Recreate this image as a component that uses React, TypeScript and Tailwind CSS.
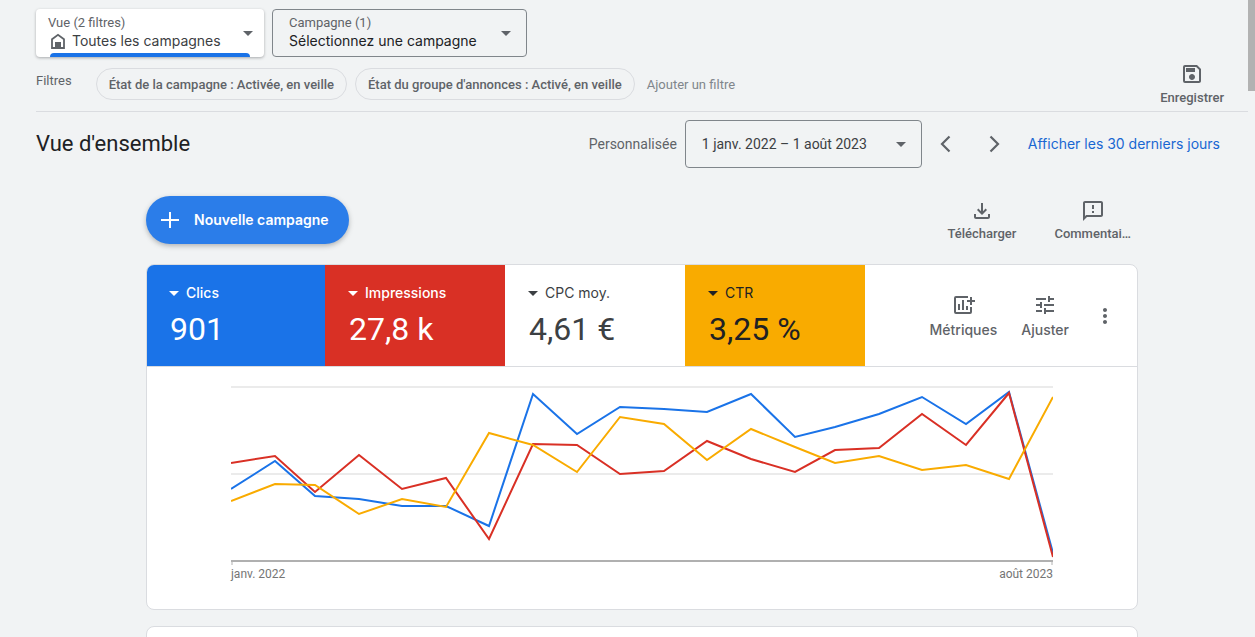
import type { ReactNode } from 'react';
import { MdArrowDropDown, MdMoreVert, MdOutlineFeedback, MdOutlineFileDownload, MdOutlineSave, MdTune } from 'react-icons/md';

const display = "font-['Inter','Liberation_Sans',sans-serif]";

const metrics = [
  { label: 'Clics', value: '901', className: 'bg-[#1a73e8] text-white', weight: 'font-medium' },
  { label: 'Impressions', value: '27,8 k', className: 'bg-[#d93025] text-white', weight: 'font-medium' },
  { label: 'CPC moy.', value: '4,61 €', className: 'bg-white text-[#3c4043]', weight: 'font-normal' },
  { label: 'CTR', value: '3,25 %', className: 'bg-[#f9ab00] text-[#202124]', weight: 'font-normal' },
];

// One x position per month, January 2022 to August 2023
const months = [0, 44, 84, 128, 171, 215, 258, 302, 346, 389, 433, 476, 520, 564, 604, 648, 691, 735, 778, 822];

const series = [
  { name: 'Clics', color: '#1a73e8', values: [108, 80, 115, 118, 125, 125, 145, 13, 53, 26, 28, 31, 13, 56, 46, 33, 16, 43, 11, 172] },
  { name: 'Impressions', color: '#d93025', values: [82, 75, 111, 74, 108, 97, 158, 63, 64, 93, 90, 60, 78, 91, 69, 67, 33, 64, 12, 176] },
  { name: 'CTR', color: '#f9ab00', values: [120, 103, 104, 133, 118, 126, 52, 64, 91, 36, 43, 79, 48, 66, 82, 75, 89, 84, 98, 16] },
];

function HomeIcon() {
  return (
    <svg viewBox="0 0 16 16" className="size-4 text-[#5f6368]" aria-hidden="true">
      <path d="M2 6.3 8 1.8l6 4.5V15H2z" fill="none" stroke="currentColor" strokeWidth="1.8" />
      <path d="M5 9h6v6H5z" fill="currentColor" />
    </svg>
  );
}

function AddChartIcon() {
  return (
    <svg viewBox="0 0 24 24" className="size-6" fill="currentColor" aria-hidden="true">
      <path d="M17 3H5a2 2 0 0 0-2 2v14a2 2 0 0 0 2 2h14a2 2 0 0 0 2-2v-5h-2v5H5V5h12z" />
      <path d="M7 11h2v6H7zM11 7h2v10h-2zM15 13h2v4h-2zM19 4h2v3h3v2h-3v3h-2V9h-3V7h3z" />
    </svg>
  );
}

function Chevron({ direction }: { direction: 'left' | 'right' }) {
  return (
    <svg viewBox="0 0 24 24" className="size-6" fill="none" stroke="currentColor" strokeWidth="2.2" aria-hidden="true">
      <path d={direction === 'left' ? 'M15.5 4.5 8 12l7.5 7.5' : 'M8.5 4.5 16 12l-7.5 7.5'} />
    </svg>
  );
}

function ToolButton({ icon, children, className = '' }: { icon: ReactNode; children: ReactNode; className?: string }) {
  return (
    <button type="button" className={`flex flex-col items-center text-[#5f6368] ${className}`}>
      {icon}
      {children}
    </button>
  );
}

function Header() {
  return (
    <header className="ml-9 flex items-end justify-between border-b border-[#dadce0] pt-[9px] pr-6 pb-[5px]">
      <div className="pb-1.5">
        <div className="flex gap-2">
          <button type="button" aria-haspopup="menu" className="relative flex h-12 w-[228px] items-center justify-between rounded bg-white pr-1 pl-3 text-left shadow-[0_1px_3px_rgba(60,64,67,0.4)]">
            <span>
              <span className="block text-[13px] leading-4 text-[#5f6368]">Vue (2 filtres)</span>
              <span className={`flex items-center gap-1.5 pl-0.5 text-sm leading-5 text-[#3c4043] ${display}`}>
                <HomeIcon />
                Toutes les campagnes
              </span>
            </span>
            <MdArrowDropDown className="size-6 text-[#5f6368]" />
            <span className="absolute bottom-0 left-3.5 h-1 w-[200px] rounded-t bg-[#1a73e8]" />
          </button>
          <button type="button" aria-haspopup="menu" className="flex h-12 w-[255px] items-center justify-between rounded border border-[#80868b] pr-2 pl-4 text-left">
            <span>
              <span className="block text-[13px] leading-4 text-[#5f6368]">Campagne (1)</span>
              <span className={`block text-sm leading-5 text-[#202124] ${display}`}>Sélectionnez une campagne</span>
            </span>
            <MdArrowDropDown className="size-6 text-[#5f6368]" />
          </button>
        </div>
        <div className="mt-[11px] flex items-start text-[13px] text-[#5f6368]">
          <span className="mr-6 pt-px leading-6">Filtres</span>
          <button type="button" className="mr-2 h-8 rounded-full border border-[#dadce0] px-3 pt-0.5 font-medium">
            État de la campagne : Activée, en veille
          </button>
          <button type="button" className="mr-3 h-8 rounded-full border border-[#dadce0] px-3 pt-0.5 font-medium">
            État du groupe d'annonces : Activé, en veille
          </button>
          <button type="button" className="h-8 pt-0.5 text-[#80868b]">Ajouter un filtre</button>
        </div>
      </div>
      <ToolButton icon={<MdOutlineSave className="mb-1 size-6" />} className="text-[13px] leading-4 font-medium">
        Enregistrer
      </ToolButton>
    </header>
  );
}

function TitleBar() {
  return (
    <div className="ml-9 flex h-16 items-center pr-7">
      <h1 className="flex-1 text-[22px] leading-7 text-[#202124]">Vue d'ensemble</h1>
      <span className="mr-2 text-sm text-[#5f6368]">Personnalisée</span>
      <button type="button" aria-haspopup="dialog" className="flex h-12 w-[237px] items-center justify-between rounded border border-[#80868b] pr-2 pl-4 text-sm text-[#3c4043]">
        1 janv. 2022 – 1 août 2023
        <MdArrowDropDown className="size-6 text-[#5f6368]" />
      </button>
      <button type="button" aria-label="Période précédente" className="grid size-12 place-items-center text-[#5f6368]">
        <Chevron direction="left" />
      </button>
      <button type="button" aria-label="Période suivante" className="grid size-12 place-items-center text-[#5f6368]">
        <Chevron direction="right" />
      </button>
      <a href="#30-jours" className={`ml-2.5 text-sm text-[#1967d2] ${display}`}>Afficher les 30 derniers jours</a>
    </div>
  );
}

function Chart() {
  return (
    <div className="px-[84px] pt-3.5 pb-[27px]">
      <svg viewBox="0 0 822 184" className="block w-full" role="img" aria-label="Évolution des métriques">
        <path d="M0 6h822M0 93h822" stroke="#ebebeb" strokeWidth="2" />
        <path d="M0 180h822" stroke="#b0b0b0" strokeWidth="2" />
        <path d="M1 180v4M821 180v4" stroke="#b0b0b0" />
        {series.map((line) => (
          <polyline
            key={line.name}
            points={line.values.map((y, i) => `${months[i]},${y}`).join(' ')}
            fill="none"
            stroke={line.color}
            strokeWidth="2"
          />
        ))}
      </svg>
      <div className="mt-px flex justify-between text-xs text-[#757575]">
        <span>janv. 2022</span>
        <span>août 2023</span>
      </div>
    </div>
  );
}

function Overview() {
  return (
    <section className="overflow-hidden rounded-lg border border-[#dadce0] bg-white">
      <div className="flex border-b border-[#dadce0]">
        {metrics.map((metric) => (
          <button
            key={metric.label}
            type="button"
            className={`flex h-[101px] w-[180px] flex-col pt-4 pl-6 text-left first:-ml-0.5 first:pl-[25px] ${metric.className}`}
          >
            <span className={`flex items-center text-sm leading-5 ${metric.weight} ${display}`}>
              <MdArrowDropDown className="-ml-2 size-6" />
              {metric.label}
            </span>
            <span className="block text-[32px] leading-[48px]">{metric.value}</span>
          </button>
        ))}
        <div className={`flex flex-1 items-center justify-end pr-5 text-sm font-medium ${display}`}>
          <ToolButton icon={<AddChartIcon />} className="mr-6 gap-[3px] pt-0.5">Métriques</ToolButton>
          <ToolButton icon={<MdTune className="size-6" />} className="mr-6 gap-[3px] pt-0.5">Ajuster</ToolButton>
          <button type="button" aria-label="Plus d'options" className="text-[#5f6368]">
            <MdMoreVert className="size-6" />
          </button>
        </div>
      </div>
      <Chart />
    </section>
  );
}

export default function App() {
  return (
    <div className="flex h-screen overflow-hidden bg-[#f1f3f4] font-['Roboto','Liberation_Sans',sans-serif]">
      <main className="min-w-0 flex-1">
        <Header />
        <TitleBar />
        <div className="ml-9">
          <div className="mx-auto max-w-[992px] pt-5">
            <div className="mb-5 flex items-center justify-between">
              <button type="button" className={`flex h-12 items-center gap-3 rounded-full bg-[#2b7de9] pr-5 pl-3 text-sm font-semibold text-white shadow-[0_2px_5px_rgba(60,64,67,0.35)] ${display}`}>
                <svg viewBox="0 0 24 24" className="size-6" stroke="currentColor" strokeWidth="2" aria-hidden="true">
                  <path d="M3 12h18M12 4v16" />
                </svg>
                Nouvelle campagne
              </button>
              <div className="flex gap-[38px] pt-[3px] pr-[7px] text-[13px] leading-5 font-medium">
                <ToolButton icon={<MdOutlineFileDownload className="size-6" />} className="gap-px">Télécharger</ToolButton>
                <ToolButton icon={<MdOutlineFeedback className="size-6" />} className="gap-px">Commentai…</ToolButton>
              </div>
            </div>
            <Overview />
            <section className="mt-4 h-40 rounded-lg border border-[#dadce0] bg-white" />
          </div>
        </div>
      </main>
      <div className="w-[7px]">
        <div className="h-[91px] bg-[#b2b2b2]" />
      </div>
    </div>
  );
}
